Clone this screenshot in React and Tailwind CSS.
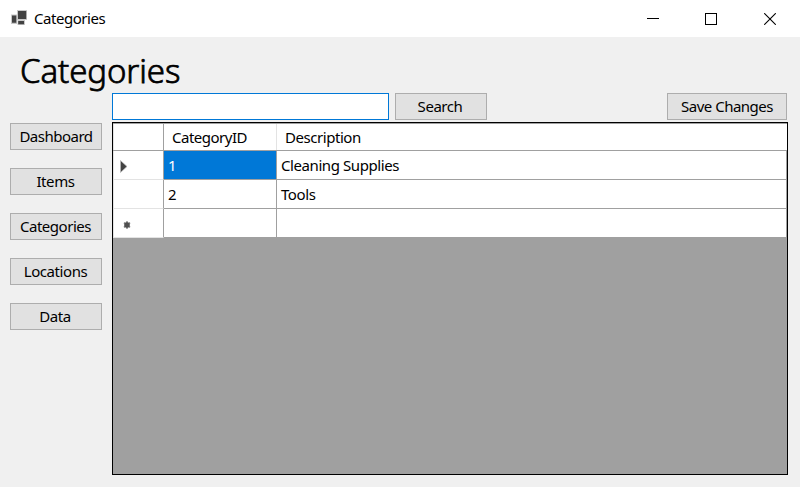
const buttonClass =
  "flex h-[27px] items-center justify-center whitespace-nowrap border border-[#adadad] bg-[#e1e1e1] pb-px";

const navItems = [
  { label: "Dashboard", spacing: "tracking-[-0.5px]" },
  { label: "Items", spacing: "tracking-[-0.4px] pr-px" },
  { label: "Categories", spacing: "tracking-[-0.47px] pr-px" },
  { label: "Locations", spacing: "tracking-[-0.42px] pr-px" },
  { label: "Data", spacing: "tracking-[-0.4px] pr-0.5" },
];

function AppIcon() {
  return (
    <svg width="17" height="16" viewBox="0 0 17 16" className="mb-px shrink-0">
      <path d="M0 4.5h6v9.5H0zM6 0h10v10H6zM6.5 10h7.5v5H6.5z" fill="#c9c9c9" />
      <path d="M1 5.5h4.3v7.2H1zM7 0.9h8.2v8.2H7zM7.2 11h5.8v3.2H7.2z" fill="#424242" />
    </svg>
  );
}

function TitleBar() {
  return (
    <header className="flex h-[37px] items-center bg-white pl-[11px] pr-6">
      <AppIcon />
      <span className="mb-0.5 ml-[6px] tracking-[-0.45px]">Categories</span>
      <div className="ml-auto flex items-center">
        <svg width="12" height="12" viewBox="0 0 12 12" shapeRendering="crispEdges" className="mr-[46px]">
          <path d="M0 5.5h12" stroke="#000" />
        </svg>
        <svg width="12" height="12" viewBox="0 0 12 12" shapeRendering="crispEdges" className="mr-[47px]">
          <rect x="0.5" y="0.5" width="11" height="11" fill="none" stroke="#000" />
        </svg>
        <svg width="12" height="12" viewBox="0 0 12 12">
          <path d="M0.2 0.2L11.8 11.8M11.8 0.2L0.2 11.8" stroke="#000" strokeWidth="1.1" />
        </svg>
      </div>
    </header>
  );
}

function GridRow({ marker, id, description, selected }) {
  return (
    <div className="flex h-[29px]">
      <div className="flex w-[51px] shrink-0 items-center border-b border-l border-r border-b-[#e3e3e3] border-l-[#e3e3e3] border-r-[#a0a0a0] pl-[6px]">
        {marker}
      </div>
      <div
        className={`flex w-[113px] shrink-0 items-center border-b border-r border-[#a0a0a0] pl-1 ${selected ? "bg-[#0078d7] text-white" : ""}`}
      >
        {id}
      </div>
      <div className="flex flex-1 items-center border-b border-r border-[#a0a0a0] pl-1 tracking-[-0.42px]">
        {description}
      </div>
    </div>
  );
}

function DataGrid() {
  return (
    <section className="h-[353px] w-[676px] border border-black bg-[#a0a0a0]">
      <div className="bg-white">
        <div className="flex h-7 border-b border-t border-[#a0a0a0]">
          <div className="w-[51px] shrink-0 border-l border-r border-l-[#e3e3e3] border-r-[#a0a0a0]" />
          <div className="flex w-[113px] shrink-0 items-center border-r border-[#e3e3e3] pl-2 tracking-[-0.5px]">
            CategoryID
          </div>
          <div className="flex flex-1 items-center pl-2 tracking-[-0.45px]">Description</div>
        </div>
        <GridRow
          id="1"
          description="Cleaning Supplies"
          selected
          marker={
            <svg width="8" height="13" viewBox="0 0 8 13" className="mt-[3px]">
              <path d="M0.5 0.5L7 6.5L0.5 12.5z" fill="#424242" stroke="#bbb" strokeWidth="0.7" />
            </svg>
          }
        />
        <GridRow id="2" description="Tools" />
        <GridRow
          marker={
            <svg width="8" height="8" viewBox="0 0 8 8" className="ml-[3px] mt-[3px]">
              <path d="M4 0.3v7.4M1 1.6l6 4.8M7 1.6L1 6.4" stroke="#858585" strokeWidth="1.8" />
              <circle cx="4" cy="4" r="2.8" fill="#505050" />
            </svg>
          }
        />
      </div>
    </section>
  );
}

export default function App() {
  return (
    <div className="h-[487px] w-[800px] overflow-hidden bg-[#f0f0f0] font-['Noto_Sans',sans-serif] text-[15px] leading-5 text-black">
      <TitleBar />
      <h1 className="h-14 pl-5 pt-[11px] text-[33px] font-light leading-[46px] tracking-[-0.1px] [-webkit-text-stroke:0.75px_#000]">
        Categories
      </h1>
      <div className="flex h-[27px] pl-28">
        <input
          type="text"
          aria-label="Search"
          className="h-[27px] w-[277px] border border-[#0078d7] bg-white px-1 outline-none"
        />
        <button className={`${buttonClass} ml-1.5 w-[92px] pr-0.5 tracking-[-0.45px]`}>Search</button>
        <button className={`${buttonClass} ml-[180px] w-[120px] tracking-[-0.5px]`}>Save Changes</button>
      </div>
      <main className="mt-0.5 flex gap-2.5 pl-2.5">
        <nav className="flex w-[92px] flex-col gap-[18px] pt-px">
          {navItems.map((item) => (
            <button key={item.label} className={`${buttonClass} ${item.spacing}`}>
              {item.label}
            </button>
          ))}
        </nav>
        <DataGrid />
      </main>
    </div>
  );
}
